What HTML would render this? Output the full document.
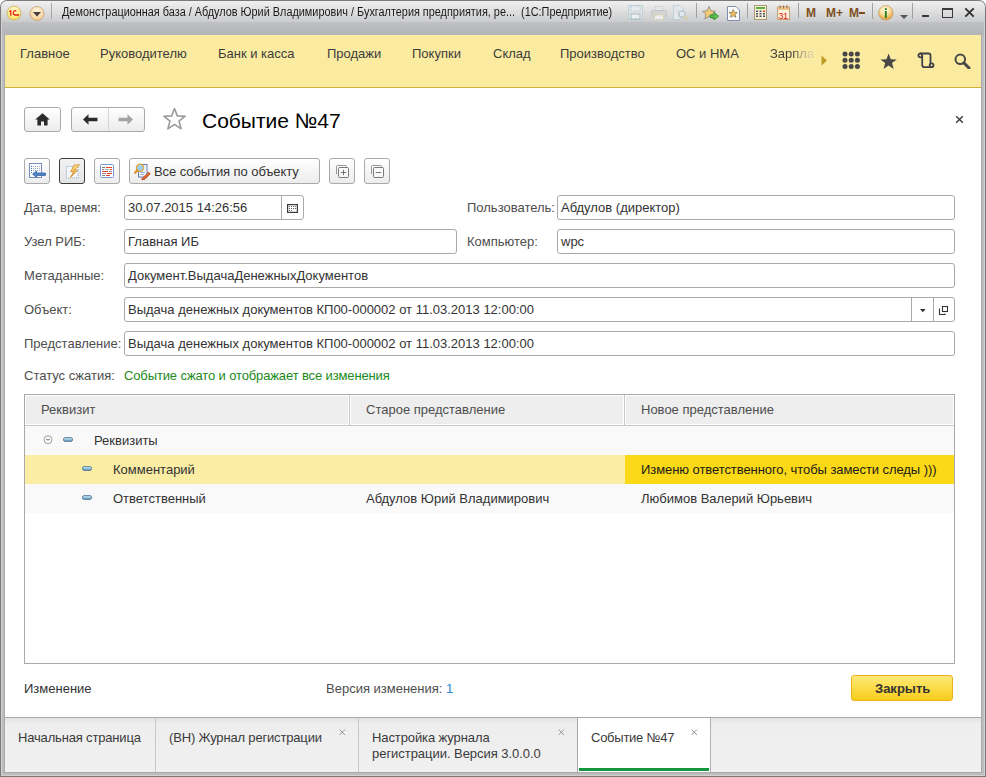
<!DOCTYPE html>
<html><head><meta charset="utf-8">
<style>
*{box-sizing:border-box;margin:0;padding:0}
html,body{width:986px;height:777px;overflow:hidden;background:#fff}
body{position:relative;font-family:"Liberation Sans",sans-serif;font-size:13px;color:#333}
.a{position:absolute}
.t{position:absolute;white-space:nowrap;line-height:16px}
#frame{left:0;top:0;width:986px;height:777px;background:#7a7a7a;border-radius:7px 7px 0 0}
#f1{left:1px;top:1px;width:984px;height:775px;background:#d2d2d2;border-radius:6px 6px 0 0}
#f2{left:2px;top:2px;width:982px;height:773px;background:#bdbdbe;border-radius:5px 5px 0 0}
#f3{left:4px;top:22px;width:978px;height:751px;background:#a9aaad}
#titlebar{left:1px;top:1px;width:984px;height:21px;background:linear-gradient(#f0f0f0,#e2e2e3 40%,#cbcccd);border-radius:6px 6px 0 0}
#band{left:2px;top:22px;width:982px;height:13px;background:linear-gradient(#c0c1c4,#b3b4b8);border-radius:3px 3px 0 0}
#nav{left:5px;top:35px;width:976px;height:53px;background:#fbeba1;border-bottom:1px solid #cdb23a}
#content{left:5px;top:88px;width:976px;height:629px;background:#fff}
#tabbar{left:5px;top:717px;width:976px;height:55px;background:linear-gradient(#e2e2e2,#eeeeee 6px,#f0f0f0);border-top:1px solid #a9a9a9}
.nv{position:absolute;top:46px;line-height:16px;color:#3c3c3c;white-space:nowrap}
.btn{position:absolute;border:1px solid #a9a9a9;border-radius:3px;background:linear-gradient(#fff,#ececec)}
.inp{position:absolute;border:1px solid #a9a9a9;border-radius:3px;background:#fff;height:25px}
.lbl{position:absolute;color:#4d4d4d;white-space:nowrap;line-height:16px}
.val{position:absolute;color:#333;white-space:nowrap;line-height:16px}
.sep{position:absolute;width:1px;background:#b8b8b8}
</style></head><body>
<div id="frame" class="a"></div><div id="f1" class="a"></div><div id="f2" class="a"></div><div id="f3" class="a"></div>
<div id="titlebar" class="a"></div>
<div id="band" class="a"></div>
<!-- title bar content -->
<svg class="a" style="left:6px;top:5px" width="16" height="16" viewBox="0 0 16 16">
 <defs><radialGradient id="lg1" cx="0.5" cy="0.3" r="0.75"><stop offset="0" stop-color="#fff8d0"/><stop offset="0.7" stop-color="#fbe87a"/><stop offset="1" stop-color="#f2d030"/></radialGradient>
 <radialGradient id="lg2" cx="0.5" cy="0.3" r="0.75"><stop offset="0" stop-color="#fff4e0"/><stop offset="0.7" stop-color="#f8d8a8"/><stop offset="1" stop-color="#eab870"/></radialGradient></defs>
 <circle cx="8" cy="8" r="7" fill="url(#lg1)" stroke="#c8b070" stroke-width="0.8"/>
 <path d="M3.2 6.2 L4.6 5 H5.4 V10.8 H4.2 V6.8 L3.2 7.2 Z" fill="#e8200c"/>
 <path d="M10.5 5.4 C9 4.2 6.6 5.2 6.6 7.8 C6.6 9.8 7.8 10.8 9.2 10.8 H13.2 V9.3 H9.4 C8.4 9.3 7.9 8.6 7.9 7.8 C7.9 6.4 9 5.9 9.9 6.7 Z" fill="#e8200c"/>
</svg>
<svg class="a" style="left:29px;top:6px" width="16" height="16" viewBox="0 0 16 16">
 <circle cx="8" cy="7.5" r="7" fill="url(#lg2)" stroke="#c8a070" stroke-width="0.8"/>
 <path d="M4 6 L12 6 L8 10.5 Z" fill="#4a3a38"/>
</svg>
<div class="sep" style="left:51px;top:3px;height:16px;background:#a8a8a8"></div>
<div class="t" style="left:62px;top:4px;font-size:12px;color:#1a1a1a;transform:scaleX(0.906);transform-origin:0 0">Демонстрационная база / Абдулов Юрий Владимирович / Бухгалтерия предприятия, ре...&nbsp;&nbsp;(1С:Предприятие)</div>

<!-- toolbar icons -->
<svg class="a" style="left:628px;top:5px" width="15" height="15" viewBox="0 0 15 15">
 <rect x="0.5" y="0.5" width="14" height="14" fill="#dfe3e6" stroke="#9fc0d0" stroke-dasharray="1 1"/>
 <rect x="3" y="1" width="9" height="5" fill="#e8ecee" stroke="#a8c4d0" stroke-width="0.8" stroke-dasharray="1 1"/>
 <rect x="3" y="9" width="9" height="5" fill="#eceeef" stroke="#9ab0bc" stroke-width="0.8"/>
</svg>
<svg class="a" style="left:651px;top:6px" width="16" height="14" viewBox="0 0 16 14">
 <rect x="4" y="0.5" width="8" height="4" fill="#e6e6e6" stroke="#b8c8c8" stroke-dasharray="1 1"/>
 <rect x="0.5" y="4.5" width="15" height="6" rx="1.5" fill="#d4d4d4" stroke="#c0c8c8"/>
 <rect x="3.5" y="9" width="9" height="4.5" fill="#ececec" stroke="#d8cc90" stroke-dasharray="1 1"/>
</svg>
<svg class="a" style="left:673px;top:5px" width="16" height="15" viewBox="0 0 16 15">
 <path d="M0.5 0.5 H7 L10 3.5 V8 M0.5 0.5 V14.5 H7" fill="#e4e8ea" stroke="#9fc0d0" stroke-dasharray="1 1"/>
 <circle cx="9" cy="9" r="3.2" fill="#dfe6ee" stroke="#a8bcc8"/>
 <path d="M11 11 L14.5 14.5" stroke="#d8cc90" stroke-width="1.6"/>
</svg>
<div class="sep" style="left:696px;top:3px;height:15px;background:#a0a0a0"></div>
<svg class="a" style="left:702px;top:6px" width="17" height="15" viewBox="0 0 17 15">
 <path d="M7 0.5 L9 5 L13.5 5.3 L10 8.3 L11.2 13 L7 10.4 L2.8 13 L4 8.3 L0.5 5.3 L5 5 Z" fill="#f4c978" stroke="#8a8a7a" stroke-width="0.8"/>
 <path d="M8 9 H12 V6.5 L16.5 10.2 L12 14 V11.5 H8 Z" fill="#5cc24a" stroke="#2a8a2a" stroke-width="0.9"/>
</svg>
<svg class="a" style="left:727px;top:6px" width="13" height="15" viewBox="0 0 13 15">
 <path d="M0.5 0.5 H9 L12.5 4 V14.5 H0.5 Z" fill="#fafafa" stroke="#7f8fb0"/>
 <path d="M6.2 3.5 L7.4 6.3 L10.4 6.5 L8.1 8.4 L8.9 11.3 L6.2 9.7 L3.5 11.3 L4.3 8.4 L2 6.5 L5 6.3 Z" fill="#f0c060" stroke="#6a6040" stroke-width="0.6"/>
</svg>
<div class="sep" style="left:747px;top:3px;height:15px;background:#a0a0a0"></div>
<svg class="a" style="left:754px;top:5px" width="13" height="15" viewBox="0 0 13 15">
 <rect x="0.5" y="0.5" width="12" height="14" fill="#faf0d2" stroke="#a89878"/>
 <rect x="2" y="2" width="9" height="2" fill="#5aae48"/>
 <g fill="#4a5078"><rect x="2" y="5.5" width="2" height="1.5"/><rect x="5.5" y="5.5" width="2" height="1.5"/><rect x="9" y="5.5" width="2" height="1.5" fill="#d84a28"/>
 <rect x="2" y="8" width="2" height="1.5"/><rect x="5.5" y="8" width="2" height="1.5"/><rect x="9" y="8" width="2" height="1.5"/>
 <rect x="2" y="10.5" width="2" height="1.5"/><rect x="5.5" y="10.5" width="2" height="1.5"/><rect x="9" y="10.5" width="2" height="1.5"/></g>
</svg>
<svg class="a" style="left:777px;top:5px" width="13" height="15" viewBox="0 0 13 15">
 <rect x="0.5" y="2" width="12" height="12.5" fill="#fbf2dc" stroke="#c0a078"/>
 <rect x="1" y="2.5" width="11" height="2.5" fill="#f2c890"/>
 <g fill="#a07040"><rect x="2.5" y="0.5" width="1.2" height="3"/><rect x="5.9" y="0.5" width="1.2" height="3"/><rect x="9.3" y="0.5" width="1.2" height="3"/></g>
 <text x="1.2" y="13.6" font-family="Liberation Sans" font-size="9.5" fill="#e82010" letter-spacing="-0.4">31</text>
</svg>
<div class="sep" style="left:798px;top:3px;height:15px;background:#a0a0a0"></div>
<div class="t" style="left:806px;top:5px;font-size:12px;font-weight:bold;color:#7f4f22;letter-spacing:0">M</div>
<div class="t" style="left:826px;top:5px;font-size:12px;font-weight:bold;color:#7f4f22">M+</div>
<div class="t" style="left:849px;top:5px;font-size:12px;font-weight:bold;color:#7f4f22">M</div><div class="a" style="left:859px;top:12px;width:6px;height:2px;background:#7f4f22"></div>
<div class="sep" style="left:872px;top:3px;height:16px;background:#a0a0a0"></div>
<svg class="a" style="left:878px;top:5px" width="16" height="16" viewBox="0 0 16 16">
 <defs><radialGradient id="ig" cx="0.45" cy="0.3" r="0.75"><stop offset="0" stop-color="#fffbe8"/><stop offset="0.45" stop-color="#fbe0a0"/><stop offset="0.85" stop-color="#eaa840"/><stop offset="1" stop-color="#d08a28"/></radialGradient></defs>
 <circle cx="7.8" cy="7.8" r="7.2" fill="url(#ig)" stroke="#b88a50" stroke-width="0.6"/>
 <rect x="6.9" y="3.2" width="1.8" height="1.8" fill="#1f7a1f"/>
 <rect x="6.9" y="6" width="1.8" height="7" fill="#1f7a1f"/>
</svg>
<svg class="a" style="left:900px;top:15px" width="8" height="4" viewBox="0 0 8 4"><path d="M0 0 H8 L4 4 Z" fill="#555"/></svg>
<div class="sep" style="left:912px;top:3px;height:16px;background:#a0a0a0"></div>
<div class="a" style="left:922px;top:15px;width:7px;height:2px;background:#3a3a3a"></div>
<div class="a" style="left:942px;top:8px;width:11px;height:10px;border:1px solid #3a3a3a;border-top-width:2px"></div>
<svg class="a" style="left:964px;top:7px" width="11" height="11" viewBox="0 0 11 11"><path d="M1.3 1.3 L9.7 9.7 M9.7 1.3 L1.3 9.7" stroke="#333" stroke-width="1.9"/></svg>

<div id="nav" class="a"></div>
<div class="nv" style="left:20px">Главное</div>
<div class="nv" style="left:100px">Руководителю</div>
<div class="nv" style="left:218px">Банк и касса</div>
<div class="nv" style="left:327px">Продажи</div>
<div class="nv" style="left:412px">Покупки</div>
<div class="nv" style="left:493px">Склад</div>
<div class="nv" style="left:560px">Производство</div>
<div class="nv" style="left:676px">ОС и НМА</div>
<div class="nv" style="left:770px;background:linear-gradient(90deg,#3c3c3c 52%,#a09a88 72%,#e8dcae 100%);-webkit-background-clip:text;color:transparent">Зарпла</div>

<svg class="a" style="left:821px;top:55px" width="7" height="11" viewBox="0 0 7 11"><path d="M0.5 0.5 L6 5.5 L0.5 10.5 Z" fill="#bb9c22"/></svg>
<svg class="a" style="left:842px;top:51px" width="19" height="19" viewBox="0 0 19 19"><g fill="#474747">
<circle cx="3" cy="3" r="2.5"/><circle cx="9.2" cy="3" r="2.5"/><circle cx="15.4" cy="3" r="2.5"/>
<circle cx="3" cy="9.2" r="2.5"/><circle cx="9.2" cy="9.2" r="2.5"/><circle cx="15.4" cy="9.2" r="2.5"/>
<circle cx="3" cy="15.4" r="2.5"/><circle cx="9.2" cy="15.4" r="2.5"/><circle cx="15.4" cy="15.4" r="2.5"/></g></svg>
<svg class="a" style="left:880px;top:53px" width="18" height="17" viewBox="0 0 18 17"><path d="M8.6 0.6 L10.8 6.2 L16.8 6.4 L12 10.1 L13.7 15.9 L8.6 12.5 L3.5 15.9 L5.2 10.1 L0.4 6.4 L6.4 6.2 Z" fill="#474747"/></svg>
<svg class="a" style="left:917px;top:52px" width="18" height="17" viewBox="0 0 18 17" fill="none" stroke="#404048" stroke-width="1.8">
 <circle cx="3.3" cy="3.4" r="1.9"/>
 <path d="M3.3 1.5 H11.5 Q13.5 1.5 13.5 3.5 V11.4"/>
 <path d="M5.2 3.4 V13 Q5.2 15.2 7.4 15.2 H14.6"/>
 <circle cx="14.6" cy="13.3" r="1.9"/>
</svg>
<svg class="a" style="left:954px;top:53px" width="17" height="16" viewBox="0 0 17 16"><circle cx="6.3" cy="6.3" r="4.8" fill="none" stroke="#474747" stroke-width="2"/><path d="M9.8 9.8 L15 15" stroke="#474747" stroke-width="3" stroke-linecap="round"/></svg>

<div id="content" class="a"></div>
<!-- form header -->
<div class="btn" style="left:24px;top:107px;width:37px;height:25px"></div>
<svg class="a" style="left:35px;top:113px" width="15" height="13" viewBox="0 0 15 13"><path d="M7.5 0.3 L14.8 6.6 H12.6 V12.5 H9 V8.5 H6 V12.5 H2.4 V6.6 H0.2 Z" fill="#2b2b2b"/></svg>
<div class="btn" style="left:71px;top:107px;width:74px;height:25px"></div>
<div class="a" style="left:108px;top:108px;width:1px;height:23px;background:#d6d6d6"></div>
<svg class="a" style="left:83px;top:114px" width="15" height="11" viewBox="0 0 15 11"><path d="M0 5.5 L5.5 0.2 V3.8 H14.5 V7.2 H5.5 V10.8 Z" fill="#2b2b2b"/></svg>
<svg class="a" style="left:118px;top:114px" width="15" height="11" viewBox="0 0 15 11"><path d="M15 5.5 L9.5 0.2 V3.8 H0.5 V7.2 H9.5 V10.8 Z" fill="#a3a3a3"/></svg>
<svg class="a" style="left:162px;top:107px" width="25" height="24" viewBox="0 0 25 24"><path d="M12.5 1.5 L15.3 8.9 L23.2 9.2 L17 14.1 L19.1 21.8 L12.5 17.4 L5.9 21.8 L8 14.1 L1.8 9.2 L9.7 8.9 Z" fill="#fff" stroke="#9a9a9a" stroke-width="1.6" stroke-linejoin="round"/></svg>
<div class="t" style="left:202px;top:109px;font-size:21px;line-height:24px;color:#000">Событие №47</div>
<svg class="a" style="left:955px;top:115px" width="9" height="9" viewBox="0 0 9 9"><path d="M1.2 1.2 L7.8 7.8 M7.8 1.2 L1.2 7.8" stroke="#3a3a3a" stroke-width="1.4"/></svg>

<!-- command bar -->
<div class="btn" style="left:24px;top:158px;width:26px;height:26px"></div>
<svg class="a" style="left:29px;top:163px" width="17" height="16" viewBox="0 0 17 16">
 <rect x="0.5" y="0.5" width="12" height="14" fill="#fbfcfe" stroke="#6a84b0" stroke-width="0.9"/>
 <g fill="#4a70b8"><rect x="2" y="3" width="1" height="1"/><rect x="2" y="5" width="1" height="1"/><rect x="2" y="7" width="1" height="1"/><rect x="2" y="9" width="1" height="1"/></g>
 <g stroke="#a0b0c8" stroke-width="1" stroke-dasharray="1 1"><path d="M4 3.5 H11 M4 5.5 H11 M4 7.5 H11 M4 9.5 H7"/></g>
 <path d="M3.6 11.2 L7.6 8 V10 H16.4 V12.4 H7.6 V14.4 Z" fill="#4f8ad0" stroke="#2a5294" stroke-width="0.7"/>
 
</svg>
<div class="btn" style="left:59px;top:158px;width:26px;height:26px;border:1px solid #3c3c3c;background:linear-gradient(#f2f2f2,#e4e4e4)"></div>
<svg class="a" style="left:66px;top:164px" width="15" height="15" viewBox="0 0 15 15">
 <defs><linearGradient id="lt" x1="0" y1="0" x2="0" y2="1"><stop offset="0" stop-color="#fde08a"/><stop offset="1" stop-color="#f0a020"/></linearGradient></defs>
 <rect x="0.5" y="2.5" width="11.5" height="11.5" fill="#f4f8fc" stroke="#7898c0" stroke-width="0.8" stroke-dasharray="1 1"/>
 <path d="M13.6 0.8 L8.2 1 L4.6 7.6 H7.8 L4.2 13.8 L11.6 6.2 H8.6 Z" fill="url(#lt)" stroke="#c8801a" stroke-width="0.7" stroke-linejoin="round"/>
</svg>
<div class="btn" style="left:94px;top:158px;width:26px;height:26px"></div>
<svg class="a" style="left:100px;top:164px" width="14" height="14" viewBox="0 0 14 14">
 <rect x="0.5" y="0.5" width="13" height="13" rx="1" fill="#fff" stroke="#7898d0" stroke-width="1"/>
 <g stroke-width="1"><path d="M2 3.5 H5" stroke="#777"/><path d="M6 3.5 H12" stroke="#e8402a"/>
 <path d="M2 5.5 H4" stroke="#888"/><path d="M5 5.5 H9" stroke="#aaa"/><path d="M10 5.5 H12" stroke="#e8402a"/>
 <path d="M2 7.5 H8" stroke="#e8402a"/><path d="M9 7.5 H12" stroke="#888"/>
 <path d="M2 9.5 H6" stroke="#888"/><path d="M7 9.5 H12" stroke="#e8402a"/>
 <path d="M2 11.5 H5" stroke="#888"/><path d="M6 11.5 H10" stroke="#e8402a"/></g>
</svg>
<div class="btn" style="left:129px;top:158px;width:191px;height:26px"></div>
<svg class="a" style="left:134px;top:163px" width="17" height="17" viewBox="0 0 17 17">
 <rect x="4.5" y="1.5" width="8.5" height="12.5" fill="#eef4fb" stroke="#5872a8" stroke-width="0.9"/>
 <path d="M6.5 9.5 H11 M6.5 11.5 H10" stroke="#7f9ac8" stroke-width="0.8"/>
 <circle cx="6" cy="4.8" r="3.6" fill="#9fd0f4" stroke="#e0a838" stroke-width="1.3"/>
 <path d="M3.4 7.4 L1 9.8" stroke="#d8902a" stroke-width="2.2" stroke-linecap="round"/>
 <path d="M8.2 15.6 L14.6 9.2 L16.2 10.8 L9.8 17 L7.8 17 Z" fill="#f06a30" stroke="#9a3a18" stroke-width="0.8"/>
</svg>
<div class="t" style="left:154px;top:164px;color:#333;letter-spacing:-0.08px">Все события по объекту</div>
<div class="btn" style="left:329px;top:158px;width:26px;height:26px"></div>
<svg class="a" style="left:335px;top:164px" width="14" height="15" viewBox="0 0 14 15">
 <path d="M1.5 10 V2.5 Q1.5 1.5 2.5 1.5 H10.5 Q11.5 1.5 11.5 2.5 V3.5" fill="none" stroke="#8a8a8a" stroke-width="0.9"/>
 <rect x="3.5" y="3.5" width="10" height="10" rx="1" fill="#f8f8f8" stroke="#7a7a7a" stroke-width="1"/>
 <path d="M8.5 5.8 V11.2 M5.8 8.5 H11.2" stroke="#666" stroke-width="0.9"/>
</svg>
<div class="btn" style="left:364px;top:158px;width:26px;height:26px"></div>
<svg class="a" style="left:370px;top:164px" width="14" height="15" viewBox="0 0 14 15">
 <path d="M1.5 10 V2.5 Q1.5 1.5 2.5 1.5 H10.5 Q11.5 1.5 11.5 2.5 V3.5" fill="none" stroke="#8a8a8a" stroke-width="0.9"/>
 <rect x="3.5" y="3.5" width="10" height="10" rx="1" fill="#f8f8f8" stroke="#7a7a7a" stroke-width="1"/>
 <path d="M5.8 8.5 H11.2" stroke="#666" stroke-width="0.9"/>
</svg>

<!-- fields -->
<div class="lbl" style="left:24px;top:200px">Дата, время:</div>
<div class="inp" style="left:124px;top:195px;width:180px"></div>
<div class="a" style="left:281px;top:196px;width:1px;height:23px;background:#a9a9a9"></div>
<svg class="a" style="left:287px;top:204px" width="11" height="9" viewBox="0 0 11 9">
 <rect x="0.6" y="0.6" width="9.8" height="7.8" fill="#fff" stroke="#3a3a3a" stroke-width="1.2"/>
 <g fill="#444"><circle cx="2.5" cy="2.5" r="0.55"/><circle cx="4.5" cy="2.5" r="0.55"/><circle cx="6.5" cy="2.5" r="0.55"/><circle cx="8.5" cy="2.5" r="0.55"/>
 <circle cx="2.5" cy="4.5" r="0.55"/><circle cx="4.5" cy="4.5" r="0.55"/><circle cx="6.5" cy="4.5" r="0.55"/><circle cx="8.5" cy="4.5" r="0.55"/>
 <circle cx="2.5" cy="6.5" r="0.55"/><circle cx="4.5" cy="6.5" r="0.55"/></g>
</svg>
<div class="val" style="left:128px;top:200px">30.07.2015 14:26:56</div>
<div class="lbl" style="left:467px;top:200px">Пользователь:</div>
<div class="inp" style="left:557px;top:195px;width:398px"></div>
<div class="val" style="left:561px;top:200px">Абдулов (директор)</div>

<div class="lbl" style="left:24px;top:234px">Узел РИБ:</div>
<div class="inp" style="left:124px;top:229px;width:333px"></div>
<div class="val" style="left:128px;top:234px">Главная ИБ</div>
<div class="lbl" style="left:467px;top:234px">Компьютер:</div>
<div class="inp" style="left:557px;top:229px;width:398px"></div>
<div class="val" style="left:561px;top:234px">wpc</div>

<div class="lbl" style="left:24px;top:268px">Метаданные:</div>
<div class="inp" style="left:124px;top:263px;width:831px"></div>
<div class="val" style="left:128px;top:268px">Документ.ВыдачаДенежныхДокументов</div>

<div class="lbl" style="left:24px;top:302px">Объект:</div>
<div class="inp" style="left:124px;top:297px;width:831px"></div>
<div class="a" style="left:911px;top:298px;width:1px;height:23px;background:#a9a9a9"></div>
<div class="a" style="left:933px;top:298px;width:1px;height:23px;background:#a9a9a9"></div>
<svg class="a" style="left:920px;top:309px" width="6" height="4" viewBox="0 0 6 4"><path d="M0 0 H5.6 L2.8 3.2 Z" fill="#333"/></svg>
<svg class="a" style="left:938px;top:305px" width="12" height="11" viewBox="0 0 12 11"><path d="M1.5 3.5 V9.5 H7 V8.5" fill="none" stroke="#333" stroke-width="1.1"/><rect x="4.5" y="1.5" width="5" height="5" fill="none" stroke="#333" stroke-width="1.1"/></svg>
<div class="val" style="left:128px;top:302px">Выдача денежных документов КП00-000002 от 11.03.2013 12:00:00</div>

<div class="lbl" style="left:24px;top:336px">Представление:</div>
<div class="inp" style="left:124px;top:331px;width:831px"></div>
<div class="val" style="left:128px;top:336px">Выдача денежных документов КП00-000002 от 11.03.2013 12:00:00</div>

<div class="lbl" style="left:24px;top:368px">Статус сжатия:</div>
<div class="val" style="left:124px;top:368px;color:#208a20;letter-spacing:-0.13px">Событие сжато и отображает все изменения</div>

<!-- table -->
<div class="a" style="left:24px;top:394px;width:931px;height:270px;border:1px solid #a9a9a9;background:#fff"></div>
<div class="a" style="left:25px;top:395px;width:929px;height:31px;background:#eeeeee;border:1px solid #fff;border-bottom:none"></div><div class="a" style="left:25px;top:424px;width:929px;height:1px;background:#fff"></div><div class="a" style="left:25px;top:425px;width:929px;height:1px;background:#c8c8c8"></div>
<div class="a" style="left:348px;top:395px;width:3px;height:30px;background:#fff;border-left:1px solid #fff;border-right:1px solid #fff"></div><div class="a" style="left:349px;top:395px;width:1px;height:30px;background:#c8c8c8"></div>
<div class="a" style="left:623px;top:395px;width:3px;height:30px;background:#fff"></div><div class="a" style="left:624px;top:395px;width:1px;height:30px;background:#c8c8c8"></div>
<div class="lbl" style="left:41px;top:402px">Реквизит</div>
<div class="lbl" style="left:366px;top:402px">Старое представление</div>
<div class="lbl" style="left:641px;top:402px">Новое представление</div>

<div class="a" style="left:25px;top:426px;width:929px;height:29px;background:#f9f9f9"></div>
<div class="a" style="left:25px;top:455px;width:600px;height:29px;background:#fceda4"></div>
<div class="a" style="left:625px;top:455px;width:329px;height:29px;background:#fbd916"></div>
<div class="a" style="left:25px;top:484px;width:929px;height:29px;background:#f9f9f9"></div>

<svg class="a" style="left:43px;top:435px" width="11" height="10" viewBox="0 0 11 10"><circle cx="5" cy="4.7" r="4" fill="none" stroke="#a0a0a0"/><path d="M3 4.7 H7" stroke="#808080"/></svg>
<svg class="a" style="left:63px;top:437px" width="12" height="6" viewBox="0 0 12 6"><defs><linearGradient id="pg" x1="0" y1="0" x2="0" y2="1"><stop offset="0" stop-color="#d8f0f8"/><stop offset="0.5" stop-color="#98c8e0"/><stop offset="1" stop-color="#5a88b0"/></linearGradient></defs><rect x="0.5" y="0.6" width="9" height="3.8" rx="1.6" fill="url(#pg)" stroke="#56789a" stroke-width="0.9"/></svg>
<div class="val" style="left:94px;top:433px">Реквизиты</div>
<svg class="a" style="left:82px;top:466px" width="12" height="6" viewBox="0 0 12 6"><rect x="0.5" y="0.6" width="9" height="3.8" rx="1.6" fill="url(#pg)" stroke="#56789a" stroke-width="0.9"/></svg>
<div class="val" style="left:113px;top:462px">Комментарий</div>
<div class="val" style="left:641px;top:462px;color:#1a1a1a;letter-spacing:-0.07px">Изменю ответственного, чтобы замести следы )))</div>
<svg class="a" style="left:82px;top:495px" width="12" height="6" viewBox="0 0 12 6"><rect x="0.5" y="0.6" width="9" height="3.8" rx="1.6" fill="url(#pg)" stroke="#56789a" stroke-width="0.9"/></svg>
<div class="val" style="left:113px;top:491px">Ответственный</div>
<div class="val" style="left:366px;top:491px">Абдулов Юрий Владимирович</div>
<div class="val" style="left:641px;top:491px">Любимов Валерий Юрьевич</div>

<!-- footer -->
<div class="val" style="left:24px;top:681px">Изменение</div>
<div class="lbl" style="left:326px;top:681px">Версия изменения: <span style="color:#2a88d2">1</span></div>
<div class="a" style="left:851px;top:675px;width:102px;height:26px;border:1px solid #ecb21c;border-radius:3px;background:linear-gradient(#ffe97a,#fbdc48 50%,#f8cd1c)"></div>
<div class="t" style="left:875px;top:681px;font-weight:bold;color:#333">Закрыть</div>

<div id="tabbar" class="a"></div>

<div class="a" style="left:155px;top:718px;width:1px;height:54px;background:#c8c8c8"></div>
<div class="a" style="left:358px;top:718px;width:1px;height:54px;background:#c8c8c8"></div>
<div class="a" style="left:577px;top:718px;width:134px;height:54px;background:#fff;border-left:1px solid #a8a8a8;border-right:1px solid #b0b0b0"></div>
<div class="a" style="left:579px;top:768px;width:130px;height:3px;background:#14953e"></div>
<div class="lbl" style="left:18px;top:730px;letter-spacing:-0.17px;color:#3a3a3a">Начальная страница</div>
<div class="lbl" style="left:169px;top:730px;letter-spacing:-0.17px;color:#3a3a3a">(ВН) Журнал регистрации</div>
<div class="lbl" style="left:372px;top:730px;letter-spacing:-0.1px;color:#3a3a3a">Настройка журнала</div>
<div class="lbl" style="left:372px;top:746px;letter-spacing:-0.04px;color:#3a3a3a">регистрации. Версия 3.0.0.0</div>
<div class="lbl" style="left:591px;top:730px;letter-spacing:-0.25px;color:#3a3a3a">Событие №47</div>
<svg class="a" style="left:339px;top:729px" width="7" height="7" viewBox="0 0 7 7"><path d="M0.5 0.5 L6 6 M6 0.5 L0.5 6" stroke="#8a8a8a" stroke-width="0.9"/></svg>
<svg class="a" style="left:558px;top:729px" width="7" height="7" viewBox="0 0 7 7"><path d="M0.5 0.5 L6 6 M6 0.5 L0.5 6" stroke="#8a8a8a" stroke-width="0.9"/></svg>
<svg class="a" style="left:691px;top:729px" width="7" height="7" viewBox="0 0 7 7"><path d="M0.5 0.5 L6 6 M6 0.5 L0.5 6" stroke="#8a8a8a" stroke-width="0.9"/></svg>
</body></html>
